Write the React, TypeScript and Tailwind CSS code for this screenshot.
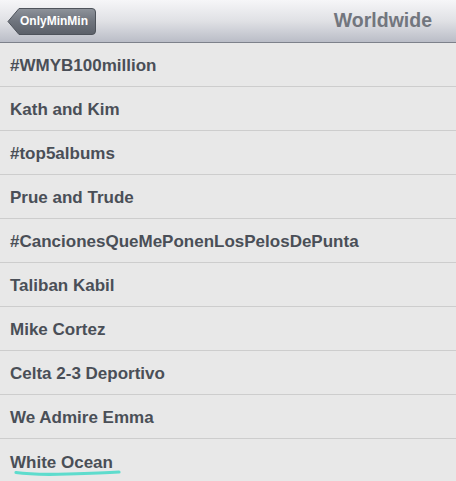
import React from "react";

const items = [
  "#WMYB100million",
  "Kath and Kim",
  "#top5albums",
  "Prue and Trude",
  "#CancionesQueMePonenLosPelosDePunta",
  "Taliban Kabil",
  "Mike Cortez",
  "Celta 2-3 Deportivo",
  "We Admire Emma",
  "White Ocean",
];

export default function App() {
  return (
    <div
      className="w-[456px] h-[481px] overflow-hidden bg-[#e8e8e8]"
      style={{ fontFamily: '"Liberation Sans", Arial, sans-serif' }}
    >
      <div className="h-[43px] flex items-center justify-between pl-[7px] pr-[24px] bg-gradient-to-b from-[#f6f6f8] via-[#e0e1e5] to-[#babdc7] border-b border-[#7d818b]">
        <div className="relative h-[29px] flex items-center">
          <svg width="90" height="29" viewBox="0 0 90 29" className="absolute left-0 top-0">
            <defs>
              <linearGradient id="bb" x1="0" y1="0" x2="0" y2="1">
                <stop offset="0" stopColor="#8e939b" />
                <stop offset="0.5" stopColor="#6f747d" />
                <stop offset="1" stopColor="#5b6069" />
              </linearGradient>
            </defs>
            <path
              d="M1 14.5 L12 1.5 L85 1.5 Q88.5 1.5 88.5 5 L88.5 24 Q88.5 27.5 85 27.5 L12 27.5 Z"
              fill="url(#bb)"
              stroke="#4e535b"
              strokeWidth="1"
            />
          </svg>
          <span className="relative pl-[13px] pr-[9px] text-[12px] font-bold text-white leading-none">
            OnlyMinMin
          </span>
        </div>
        <span className="text-[19.5px] font-bold text-[#72767e] leading-none">Worldwide</span>
      </div>
      {items.map((t, i) => (
        <div
          key={t}
          className={`relative h-[44px] flex items-center pl-[10px] pt-[3px] text-[17px] font-bold text-[#4a4f57] ${
            i < items.length - 1 ? "border-b border-[#cdcdcd]" : ""
          }`}
        >
          <span>{t}</span>
          {i === items.length - 1 && (
            <svg
              className="absolute left-[13px] top-[29px]"
              width="112"
              height="9"
              viewBox="0 0 112 9"
            >
              <path
                d="M3 4.5 Q20 7 55 6 Q90 5 106 4"
                stroke="#5edccd"
                strokeWidth="3.2"
                fill="none"
                strokeLinecap="round"
              />
            </svg>
          )}
        </div>
      ))}
    </div>
  );
}
